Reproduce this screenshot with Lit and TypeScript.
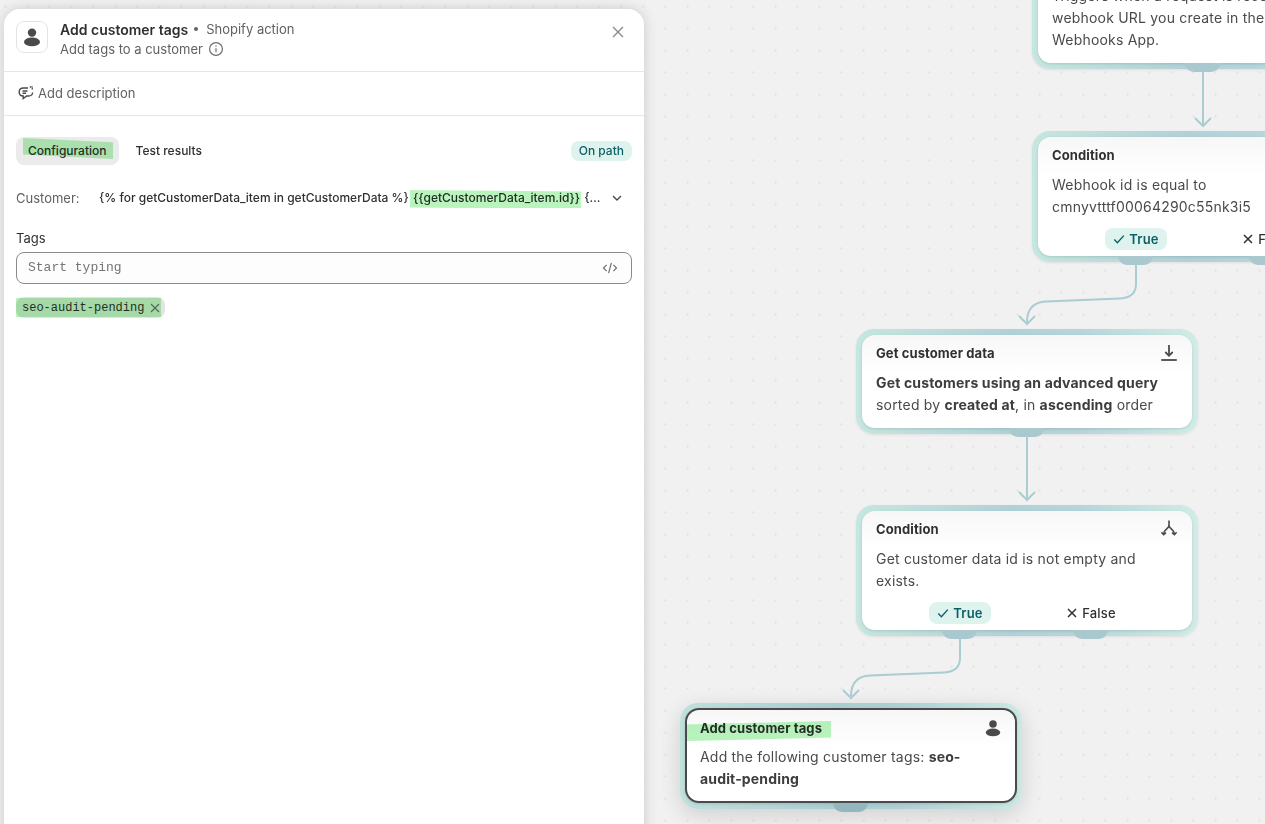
import { LitElement, css, html, svg } from "lit";
import { customElement } from "lit/decorators.js";

const personIcon = html`<svg width="20" height="20" viewBox="0 0 20 20" fill="currentColor"><circle cx="10" cy="5.600" r="4.200"></circle><ellipse cx="10" cy="14.900" rx="8" ry="4.300"></ellipse></svg>`;
const downloadIcon = html`<svg width="20" height="20" viewBox="0 0 20 20" fill="none" stroke="currentColor" stroke-width="1.800"><path d="M10 2v10.500"></path><path d="M6.300 9 10 12.800 13.700 9"></path><path d="M2.200 17h15.600"></path></svg>`;
const branchIcon = html`<svg width="20" height="20" viewBox="0 0 20 20" fill="none" stroke="currentColor" stroke-width="1.600"><path d="M10 1.500v5c0 3.500-5.400 3.500-5.400 8.800"></path><path d="M10 6.500c0 3.500 5.400 3.500 5.400 8.800"></path><path d="M2.400 13.200 4.600 15.700 7 13.700"></path><path d="M13 13.700 15.400 15.700 17.600 13.200"></path></svg>`;
const checkIcon = html`<svg width="12" height="12" viewBox="0 0 12 12" fill="none" stroke="currentColor" stroke-width="1.400"><path d="M1.300 6.600 4.400 9.800 10.800 2.600"></path></svg>`;
const crossIcon = html`<svg width="12" height="12" viewBox="0 0 12 12" fill="none" stroke="currentColor" stroke-width="1.500"><path d="M2 2l8 8M10 2l-8 8"></path></svg>`;

type NodeData = {
  x: number;
  y: number;
  title: string;
  icon?: unknown;
  body: unknown;
  branches?: boolean;
  selected?: boolean;
};

const nodes: NodeData[] = [
  {
    x: 1032,
    y: -58,
    title: "Webhook received",
    body: html`Triggers when a request is received at the webhook URL you create in the<br />Webhooks App.`,
  },
  {
    x: 1032,
    y: 131,
    title: "Condition",
    body: html`Webhook id is equal to cmnyvtttf00064290c55nk3i5`,
    branches: true,
  },
  {
    x: 856,
    y: 329,
    title: "Get customer data",
    icon: downloadIcon,
    body: html`<b>Get customers using an advanced query</b> sorted by <b>created at</b>, in <b>ascending</b> order`,
  },
  {
    x: 856,
    y: 505,
    title: "Condition",
    icon: branchIcon,
    body: html`Get customer data id is not empty and exists.`,
    branches: true,
  },
  {
    x: 680,
    y: 703,
    title: "Add customer tags",
    icon: personIcon,
    body: html`Add the following customer tags: <b>seo-audit-pending</b>`,
    selected: true,
  },
];

const edges = [
  { d: "M1203 69V125", tip: [1203, 126] },
  { d: "M1136 264V284Q1136 297.500 1120 298.500L1046 301.500Q1027 302.500 1027 322", tip: [1027, 324] },
  { d: "M1027 435V498", tip: [1027, 500] },
  { d: "M960 638V658Q960 671.500 944 672.500L870 675.500Q851 676.500 851 696", tip: [851, 698] },
];

@customElement("flow-node")
class FlowNode extends LitElement {
  static properties = { data: { attribute: false } };
  data!: NodeData;

  static styles = css`
    :host {
      position: absolute;
      display: block;
      width: 342px;
    }
    .frame {
      padding: 6px;
      border-radius: 18px;
      background: linear-gradient(90deg, #c6e6df 0%, #b0d2d6 45%, #b5d5d9 65%, #d0ece7 100%);
      box-shadow: 0 1px 3px rgba(0, 0, 0, 0.08);
    }
    .card {
      position: relative;
      padding: 8px 14px 12px;
      border-radius: 13px;
      background: linear-gradient(180deg, #f7f7f7 0, #ffffff 38px);
      box-shadow: 0 1px 3px rgba(0, 0, 0, 0.12);
    }
    .head {
      display: flex;
      align-items: center;
      justify-content: space-between;
      height: 20px;
      margin-bottom: 9px;
      font-size: 13px;
      line-height: 20px;
      font-weight: 650;
      letter-spacing: 0.1px;
      color: #303030;
    }
    .head .icon {
      display: flex;
      color: #4a4a4a;
      margin-right: -1px;
    }
    .body {
      font-size: 14px;
      line-height: 22px;
      letter-spacing: 0.2px;
      color: #4a4a4a;
    }
    b {
      font-weight: 650;
      letter-spacing: 0.16px;
      color: #3d3d3d;
    }
    .branching .card {
      padding-bottom: 6px;
    }
    .branches {
      display: grid;
      grid-template-columns: 131px 131px;
      margin: 10px 0 0 18.500px;
    }
    .branch {
      justify-self: center;
      display: flex;
      align-items: center;
      gap: 4px;
      height: 22px;
      padding: 0 8px;
      border-radius: 8px;
      font-size: 13px;
      font-weight: 500;
      letter-spacing: 0.15px;
      color: #303030;
    }
    .branch.on {
      background: #def3ee;
      color: #0c5f66;
      font-weight: 600;
    }
    .port {
      position: absolute;
      width: 35px;
      height: 9px;
      bottom: -3px;
      border-radius: 0 0 10px 10px;
      background: #a9c9cf;
    }
    .selected .frame {
      padding: 5px 5px 6px;
      background: linear-gradient(90deg, #bfe0dc 0%, #aacdd2 45%, #aed0d5 65%, #cbe9e3 100%);
      box-shadow: 0 6px 22px rgba(0, 0, 0, 0.14);
    }
    .selected .card {
      padding: 8px 13px 11px;
      border: 2px solid #4a4a4a;
      border-radius: 14px;
    }
    .selected .head {
      margin-bottom: 8px;
    }
    .selected .icon svg {
      width: 18px;
      height: 18px;
      margin-right: 1px;
    }
    .selected .port {
      background: #93b7bd;
    }
    .mark {
      position: absolute;
      left: 0;
      top: 11px;
      width: 144px;
      height: 20px;
      background: #b9f4bd;
      mix-blend-mode: multiply;
      clip-path: polygon(0 17%, 100% 0, 100% 83%, 0 100%);
    }
  `;

  render() {
    const n = this.data;
    return html`
      <div class="${n.branches ? "branching" : ""} ${n.selected ? "selected" : ""}">
        <div class="frame">
          <div class="card">
            <div class="head">
              <span>${n.title}</span>
              ${n.icon ? html`<span class="icon">${n.icon}</span>` : ""}
            </div>
            <div class="body">${n.body}</div>
            ${n.branches
              ? html`<div class="branches">
                  <span class="branch on">${checkIcon} True</span>
                  <span class="branch">${crossIcon} False</span>
                </div>`
              : ""}
            ${n.selected ? html`<span class="mark"></span>` : ""}
          </div>
        </div>
        ${n.branches
          ? html`<span class="port" style="left:86px"></span><span class="port" style="left:217px"></span>`
          : html`<span class="port" style="left:153px"></span>`}
      </div>
    `;
  }
}

@customElement("side-panel")
class SidePanel extends LitElement {
  static styles = css`
    :host {
      position: relative;
      z-index: 2;
      display: block;
      width: 640px;
      height: 830px;
      margin: 9px 0 0 4px;
      border-radius: 16px 16px 0 0;
      background: #ffffff;
      box-shadow: 0 0 14px rgba(0, 0, 0, 0.16);
      color: #303030;
    }
    .header {
      display: flex;
      align-items: flex-start;
      gap: 12px;
      height: 63px;
      padding: 12px 12px 0;
      box-sizing: border-box;
      border-bottom: 1px solid #e6e6e6;
    }
    .avatar {
      display: flex;
      align-items: center;
      justify-content: center;
      width: 32px;
      height: 32px;
      box-sizing: border-box;
      border: 1px solid #e3e3e3;
      border-radius: 8px;
      color: #4a4a4a;
    }
    .heading {
      flex: 1;
    }
    .title {
      display: flex;
      align-items: center;
      height: 16px;
      font-size: 14px;
      font-weight: 600;
    }
    .dot {
      width: 4px;
      height: 4px;
      margin: 0 8px 0 6px;
      border-radius: 50%;
      background: #616161;
    }
    .title small {
      font-size: 13px;
      font-weight: 400;
      color: #616161;
    }
    .sub {
      display: flex;
      align-items: center;
      gap: 5px;
      height: 20px;
      margin-top: 2px;
      font-size: 13px;
      color: #616161;
    }
    .close {
      display: flex;
      margin: 5px 8px 0 0;
      color: #8a8a8a;
    }
    .describe {
      display: flex;
      align-items: center;
      gap: 3px;
      height: 43px;
      padding: 0 0 2px 13px;
      box-sizing: border-box;
      height: 44px;
      border-bottom: 1px solid #e6e6e6;
      font-size: 13px;
      color: #616161;
    }
    .content {
      padding: 21px 12px 0;
    }
    .tabs {
      display: flex;
      align-items: center;
      gap: 5px;
    }
    .tab {
      position: relative;
      display: flex;
      align-items: center;
      height: 28px;
      padding: 0 12px 1px;
      box-sizing: border-box;
      border-radius: 8px;
      font-size: 12px;
      font-weight: 500;
    }
    .tab.active {
      background: #ebebeb;
    }
    .status {
      display: flex;
      align-items: center;
      height: 20px;
      margin-left: auto;
      padding: 0 8px 1px;
      box-sizing: border-box;
      border-radius: 8px;
      background: #def3ee;
      color: #0c5f66;
      font-size: 12px;
      font-weight: 500;
    }
    .mark {
      position: absolute;
      background: #b9f4bd;
      mix-blend-mode: multiply;
      pointer-events: none;
    }
    .tab .mark {
      left: 7px;
      top: 1px;
      width: 90px;
      height: 21px;
      clip-path: polygon(0 0, 100% 20%, 100% 100%, 0 78%);
    }
    .field {
      display: flex;
      align-items: center;
      height: 20px;
      margin-top: 23px;
    }
    .field label {
      width: 83px;
      flex: none;
      font-size: 13px;
      color: #616161;
    }
    .value {
      width: 502px;
      overflow: hidden;
      white-space: nowrap;
      text-overflow: ellipsis;
      font-size: 12px;
      line-height: 20px;
      font-weight: 450;
      color: #303030;
    }
    .value span {
      position: relative;
      padding: 0 1px;
    }
    .value .mark {
      left: -2px;
      right: 0;
      top: 0;
      height: 19px;
      padding: 0;
      clip-path: polygon(0 0, 100% 8%, 100% 100%, 0 92%);
    }
    .chev {
      display: flex;
      margin-left: 10px;
      color: #4a4a4a;
    }
    .tags-label {
      margin-top: 20px;
      font-size: 13px;
      line-height: 20px;
    }
    .input {
      display: flex;
      align-items: center;
      justify-content: space-between;
      height: 32px;
      margin-top: 4px;
      padding: 0 13px 1px 11px;
      box-sizing: border-box;
      border: 1px solid #8a8a8a;
      border-radius: 8px;
      background: #fdfdfd;
      font: 13px "Liberation Mono", monospace;
      color: #757575;
    }
    .input svg {
      color: #6e6e6e;
    }
    .chip {
      position: relative;
      display: inline-flex;
      align-items: center;
      gap: 6px;
      height: 21px;
      margin-top: 13px;
      padding: 0 5px 0 6px;
      border-radius: 8px;
      background: #e3e3e3;
      font: 12px "Liberation Mono", monospace;
      color: #303030;
    }
    .chip svg {
      color: #6e6e6e;
    }
    .chip .mark {
      left: 0;
      right: 4px;
      top: 1px;
      bottom: 1px;
    }
  `;

  render() {
    return html`
      <div class="header">
        <div class="avatar">${personIcon}</div>
        <div class="heading">
          <div class="title">Add customer tags<i class="dot"></i><small>Shopify action</small></div>
          <div class="sub">
            Add tags to a customer
            <svg width="16" height="16" viewBox="0 0 16 16" fill="none" stroke="#6e6e6e" stroke-width="1.200">
              <circle cx="8" cy="8" r="6.400"></circle>
              <path d="M8 7.200v4"></path>
              <path d="M8 4.400v1.300"></path>
            </svg>
          </div>
        </div>
        <span class="close">
          <svg width="12" height="12" viewBox="0 0 12 12" fill="none" stroke="currentColor" stroke-width="1.400"><path d="M1 1l10 10M11 1 1 11"></path></svg>
        </span>
      </div>
      <div class="describe">
        <svg width="18" height="18" viewBox="0 0 18 18" fill="none" stroke="#4a4a4a" stroke-width="1.400">
          <path d="M11 4H6.500C4 4 2.200 5.600 2.200 8s1.700 4 4 4v2.600L9.600 12h1.900c2.300 0 4-1.500 4.200-3.500"></path>
          <path d="M5.500 7h5M5.500 9.300h3.500"></path>
          <path d="M13.500 2.200v1.500M15.900 4.800h-1.300M15.500 2.600l-.8.800"></path>
        </svg>
        Add description
      </div>
      <div class="content">
        <div class="tabs">
          <div class="tab active">Configuration<span class="mark"></span></div>
          <div class="tab">Test results</div>
          <div class="status">On path</div>
        </div>
        <div class="field">
          <label>Customer:</label>
          <div class="value">{% for getCustomerData_item in getCustomerData %} <span>{{getCustomerData_item.id}}<i class="mark"></i></span> {% endfor %}</div>
          <span class="chev">
            <svg width="12" height="12" viewBox="0 0 12 12" fill="none" stroke="currentColor" stroke-width="1.400"><path d="M2 4l4 4 4-4"></path></svg>
          </span>
        </div>
        <div class="tags-label">Tags</div>
        <div class="input">
          Start typing
          <svg width="16" height="16" viewBox="0 0 16 16" fill="none" stroke="currentColor" stroke-width="1.200"><path d="M4.600 4.800 1.500 8l3.100 3.200M11.400 4.800 14.500 8l-3.100 3.200M9.400 2.800 6.600 13.200"></path></svg>
        </div>
        <div class="chip">
          seo-audit-pending
          <svg width="10" height="10" viewBox="0 0 10 10" fill="none" stroke="currentColor" stroke-width="1.100"><path d="M1 1l8 8M9 1 1 9"></path></svg>
          <span class="mark"></span>
        </div>
      </div>
    `;
  }
}

@customElement("app-root")
export class AppRoot extends LitElement {
  static styles = css`
    :host {
      position: relative;
      display: block;
      width: 100%;
      height: 824px;
      overflow: hidden;
      font-family: Inter, "Liberation Sans", sans-serif;
      background-color: #f1f1f1;
      background-image: radial-gradient(circle at center, #e2e2e2 1.2px, transparent 1.6px);
      background-size: 22px 22px;
      background-position: -5.500px -4.500px;
    }
    .edges {
      position: absolute;
      left: 0;
      top: 0;
      width: 1265px;
      height: 824px;
      fill: none;
      stroke: #a9cdd2;
      stroke-width: 2;
    }
  `;

  render() {
    return html`
      ${nodes.map((n) => html`<flow-node .data=${n} style="left:${n.x}px;top:${n.y}px"></flow-node>`)}
      <svg class="edges" viewBox="0 0 1265 824">
        ${edges.map(
          (e) => svg`<path d=${e.d}></path><path d="M${e.tip[0] - 8} ${e.tip[1] - 8}L${e.tip[0]} ${e.tip[1]}L${e.tip[0] + 8} ${e.tip[1] - 8}"></path>`
        )}
      </svg>
      <side-panel></side-panel>
    `;
  }
}
